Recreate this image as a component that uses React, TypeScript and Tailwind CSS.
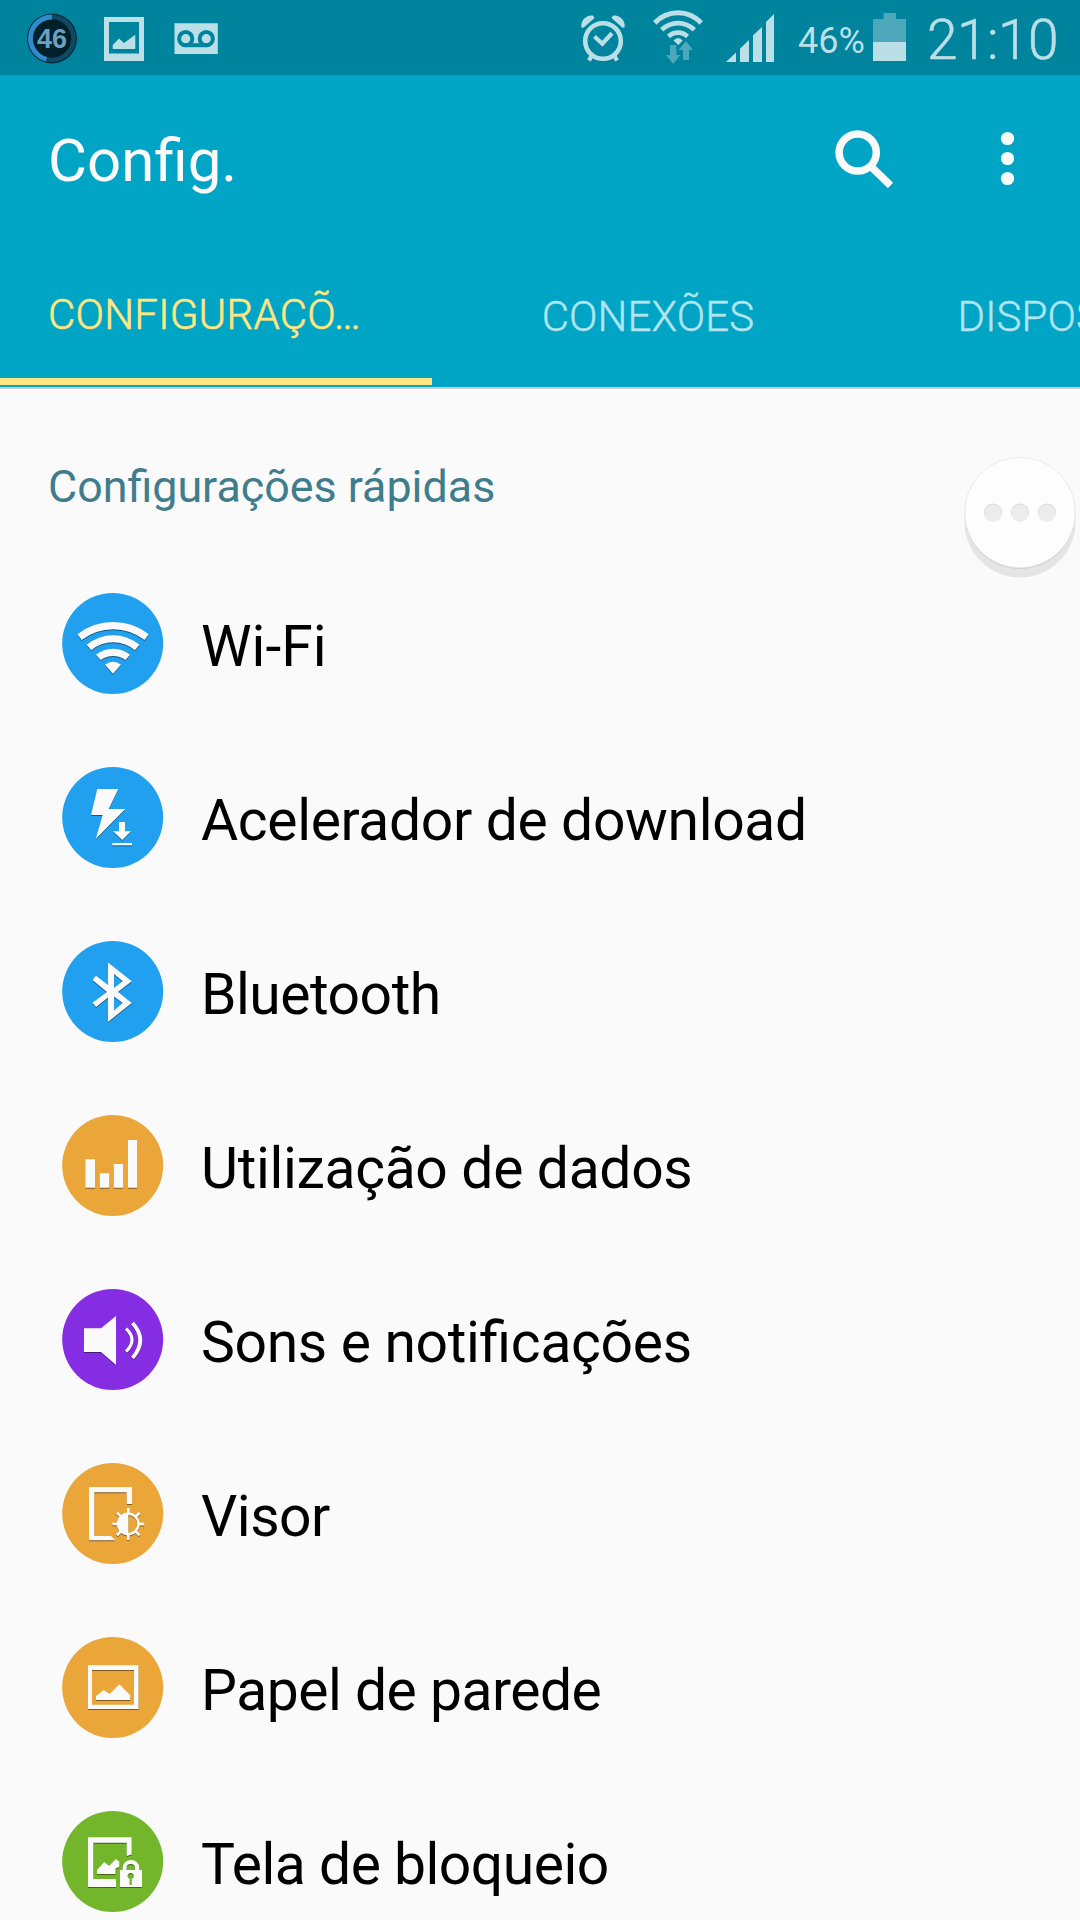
import type { ReactNode } from "react";

const MIST = "#bbdfe6";
const DIM = "#4da8bb";

function StatusBar() {
  return (
    <div className="flex h-[75px] w-full items-start bg-[#00839d] text-[#bbdfe6]">
      <svg className="ml-[26px] h-[75px] w-[52px] shrink-0" viewBox="26 0 52 75">
        <circle cx="52" cy="38.5" r="25" fill="#062b3a" />
        <circle cx="52" cy="38.5" r="21.5" fill="#00212a" stroke="#104865" strokeWidth="4.6" />
        <path d="M52 17A21.5 21.5 0 0 0 46.5 59.3" fill="none" stroke="#2f8bce" strokeWidth="4.8" />
        <text x="52" y="48.4" textAnchor="middle" fill="#6c9fc5" className="font-['Liberation_Sans'] text-[27px] font-bold">46</text>
      </svg>
      <svg className="ml-[26px] h-[75px] w-10 shrink-0" viewBox="104 0 40 75">
        <path fill={MIST} fillRule="evenodd" d="M104 17h40v44h-40zM109 22v31.500h30V22z" />
        <path fill={MIST} d="M112.700 49V45L119 38.500L124 43L135.300 34.700V49Z" />
      </svg>
      <svg className="ml-[30px] h-[75px] w-11 shrink-0" viewBox="174 0 44 75">
        <path fill={MIST} d="M174.500 23.300h43.300v30.700h-43.300z" />
        <g fill="none" stroke="#00839d" strokeWidth="4">
          <circle cx="185.700" cy="38.700" r="6.600" />
          <circle cx="206.300" cy="38.700" r="6.600" />
          <path d="M185 45.200h22" />
        </g>
      </svg>
      <div className="grow" />
      <svg className="h-[75px] w-[46px] shrink-0" viewBox="580 0 46 75">
        <g fill="none" stroke={MIST}>
          <circle cx="603" cy="41" r="17.800" strokeWidth="4.600" />
          <path d="M594.500 36.500l7.800 7.200L612 33.300" strokeWidth="4.200" />
          <path d="M592 55l-3 5.500M614 55l3 5.500" strokeWidth="4.200" />
        </g>
        <path fill={MIST} d="M581.500 27.500C580 21 586 14.500 593 15.500L594.500 18L583.500 27.800Z M624.500 27.500C626 21 620 14.500 613 15.500L611.500 18L622.500 27.800Z" />
      </svg>
      <svg className="ml-[26px] h-[75px] w-[52px] shrink-0" viewBox="652 0 52 75">
        <g fill={MIST}>
          <path d="M653 21A34.300 34.300 0 0 1 703 21L699.500 24.800A29 29 0 0 0 656.500 24.800Z" />
          <path d="M660 28A26 26 0 0 1 696 28L692.700 31.500A21 21 0 0 0 663.300 31.500Z" />
          <path d="M667 34.700A16 16 0 0 1 689 34.700L686 38.300A11.500 11.500 0 0 0 670 38.300Z" />
          <path d="M673.500 40.500Q678 35.500 682.700 40.500L678.300 45Z" />
        </g>
        <path fill={DIM} d="M670 45h6.300v10h4L673.300 64L666 55h4ZM686 41L693 50h-4v10h-6V50h-4.500Z" />
      </svg>
      <svg className="ml-[22px] h-[75px] w-12 shrink-0" viewBox="726 0 48 75">
        <path fill={MIST} d="M726 62L736 52.500V62ZM740 62V48.700L749 40V62ZM753 62V35.500L762 27V62ZM766 62V22L774 14V62Z" />
      </svg>
      <span className="ml-6 mt-[19px] w-[67px] whitespace-nowrap text-[36px] leading-[44px]">46%</span>
      <svg className="ml-2 h-[75px] w-[34px] shrink-0" viewBox="873 0 34 75">
        <path fill={DIM} d="M873 42V19h10.500v-6H896v6h10v23Z" />
        <path fill={MIST} d="M873 42h33v19h-33z" />
      </svg>
      <span className="ml-5 mt-[7px] mr-[22px] w-[131px] whitespace-nowrap text-[55px] font-light leading-[66px] tracking-[-0.5px] [-webkit-text-stroke:0.6px_#bbdfe6]">21:10</span>
    </div>
  );
}

function Header() {
  return (
    <header className="h-[314px] border-b-2 border-[#c9cdce] bg-[#00a5c6]">
      <div className="flex h-[170px] items-start pl-12">
        <h1 className="mt-[50px] text-[60px] leading-[72px] text-[#fafafa]">Config.</h1>
        <div className="grow" />
        <svg className="mt-[53px] h-[60px] w-[60px]" viewBox="834 128 60 60" fill="none" stroke="#fafafa" strokeWidth="7.500">
          <circle cx="857.700" cy="152.500" r="18.600" />
          <path d="M871 166.500L890.500 185.500" />
        </svg>
        <svg className="ml-[106px] mr-[66px] mt-[53px] h-[60px] w-[14px]" viewBox="999.500 128 14 60" fill="#fafafa">
          <circle cx="1007" cy="138.500" r="6.600" />
          <circle cx="1007" cy="158.500" r="6.600" />
          <circle cx="1007" cy="178.500" r="6.600" />
        </svg>
      </div>
      <nav className="flex h-[142px] overflow-hidden text-[42px] font-light leading-[50px]">
        <div className="flex w-[432px] shrink-0 flex-col justify-between pb-0.5 pt-[45px] text-[#ffe680]">
          <span className="pl-12 tracking-[0.25px] [-webkit-text-stroke:0.6px_#ffe680]">CONFIGURAÇÕ…</span>
          <div className="h-[7px] bg-[#ffe680]" />
        </div>
        <div className="w-[432px] shrink-0 pt-[47px] text-center tracking-[0.1px] text-[#b2e4ee] [-webkit-text-stroke:0.4px_#b2e4ee]">CONEXÕES</div>
        <div className="w-[432px] shrink-0 pt-[47px] text-center tracking-[0.1px] text-[#b2e4ee] [-webkit-text-stroke:0.4px_#b2e4ee]">DISPOSITIVO</div>
      </nav>
    </header>
  );
}

const WifiGlyph = (
  <>
    <path d="M15.500 41.300A57.400 57.400 0 0 1 86.700 41.300L82.500 47A51.400 51.400 0 0 0 19.700 47Z" />
    <path d="M24.700 51.700A41.500 41.500 0 0 1 77.500 51.700L72.800 57.300A33.400 33.400 0 0 0 29.300 57.300Z" />
    <path d="M34 61.700A27 27 0 0 1 68 61.700L63.500 67A21 21 0 0 0 38.700 67Z" />
    <path d="M43 71.700Q51 65.700 59 71.700L51 80.700Z" />
  </>
);

const BoostGlyph = (
  <>
    <path d="M35.300 22H56.300L46.700 42H63.300L33.700 72L40.700 48H29Z" />
    <path d="M57 55h6v9.300h6L60.300 73L51 64.300h6Z" />
    <path d="M50.300 76h19.700v2.300h-19.700z" />
  </>
);

const BluetoothGlyph = (
  <path
    fillRule="evenodd"
    d="M46 21.500L69.700 40.300L56 51L69.700 62L46 81V56.500L34 66L30.500 61.700L45 51L30.500 39L34 34.700L46 44ZM52 33V47L60.700 40.300ZM52 55.500V69.500L60.700 62Z"
  />
);

const BarsGlyph = (
  <path d="M23.300 44.300H33V72.700H23.300ZM37.700 58.300h9.600v14.400h-9.600ZM51.700 49H61V72.700h-9.300ZM66 25h9v47.700h-9Z" />
);

const SoundGlyph = (
  <>
    <path d="M22 39.300H39L54 27V76L39 63H22Z" />
    <path d="M64 39.700Q76 51 64 62.700" fill="none" stroke="#fafafa" strokeWidth="3.200" />
    <path d="M70.500 34Q86 51 70.500 69" fill="none" stroke="#fafafa" strokeWidth="3.800" />
  </>
);

const RAYS = [0, 45, 90, 135, 180, 225, 270, 315];

const DisplayGlyph = (
  <>
    <path d="M27 24H70V41H64.700V29.300H32.300V73H49L53.300 77.300H27Z" />
    <circle cx="66.300" cy="61" r="10.200" fill="none" stroke="#fafafa" strokeWidth="2.400" />
    <path d="M66.300 50A11 11 0 0 0 66.300 72Z" />
    {RAYS.map((a) => (
      <path key={a} d="M65 45h2.700v6h-2.700z" transform={`rotate(${a} 66.3 61)`} />
    ))}
  </>
);

const WallpaperGlyph = (
  <>
    <path fillRule="evenodd" d="M26 28.300H76.500V72H26ZM30 33V67.700H72V33Z" />
    <path d="M34 59.300L41.700 53L47.700 57L57.300 47.300L68.300 58.300V63H34Z" />
  </>
);

const LockGlyph = (
  <>
    <path d="M26 26.300H69.700V43.500L64.700 45V31.700H31.300V68H54V76H26Z" />
    <path d="M35 59L42.300 51L47 55L54 48L57.300 50.700V55.700L53.500 57.500V63H35Z" />
    <path
      fillRule="evenodd"
      d="M58 59H60.700V57A8.300 8 0 0 1 77.300 57V59H80V76H58ZM64.500 59H73V57A4.250 4 0 0 0 64.500 57ZM67.700 68V74H69.700V68A3.100 3.100 0 1 0 67.700 68Z"
    />
  </>
);

const items: { label: string; color: string; glyph: ReactNode; tracking: string }[] = [
  { label: "Wi-Fi", color: "#21a0ef", glyph: WifiGlyph, tracking: "tracking-normal" },
  { label: "Acelerador de download", color: "#21a0ef", glyph: BoostGlyph, tracking: "tracking-[-0.36px]" },
  { label: "Bluetooth", color: "#21a0ef", glyph: BluetoothGlyph, tracking: "tracking-[-0.5px]" },
  { label: "Utilização de dados", color: "#eaa638", glyph: BarsGlyph, tracking: "tracking-[-0.33px]" },
  { label: "Sons e notificações", color: "#852de2", glyph: SoundGlyph, tracking: "tracking-[-0.33px]" },
  { label: "Visor", color: "#eaa638", glyph: DisplayGlyph, tracking: "tracking-[-0.5px]" },
  { label: "Papel de parede", color: "#eaa638", glyph: WallpaperGlyph, tracking: "tracking-[-0.5px]" },
  { label: "Tela de bloqueio", color: "#73b62b", glyph: LockGlyph, tracking: "tracking-[-0.5px]" },
];

function FloatingButton() {
  return (
    <svg className="absolute right-0 top-[450px] h-[134px] w-[122px]" viewBox="958 449.500 122 134">
      <circle cx="1020" cy="521.500" r="55.500" fill="#e5e5e5" />
      <circle cx="1020" cy="513" r="55.500" fill="#d2d2d2" />
      <circle cx="1020" cy="512" r="55.300" fill="#fdfdfd" stroke="#e4e4e4" strokeWidth="0.700" />
      {[993, 1020, 1047].map((x) => (
        <g key={x}>
          <circle cx={x} cy="512" r="9" fill="#dcdcdc" />
          <circle cx={x} cy="512.700" r="8.500" fill="#ececec" />
        </g>
      ))}
    </svg>
  );
}

export default function App() {
  return (
    <div className="relative h-[1920px] w-[1080px] overflow-hidden bg-[#fafafa] font-[Roboto,sans-serif]">
      <StatusBar />
      <Header />
      <h2 className="h-[168px] pl-12 pt-[71px] text-[44.8px] leading-[54px] text-[#3f7d8c]">Configurações rápidas</h2>
      <ul>
        {items.map(({ label, color, glyph, tracking }) => (
          <li key={label} className="flex h-[174px] items-start pl-[62px]">
            <svg className="mt-9 h-[102px] w-[102px] shrink-0" viewBox="0 0 102 102">
              <circle cx="50.700" cy="50.500" r="50.500" fill={color} />
              <g fill="#fafafa" className="drop-shadow-[0.7px_1.5px_0.5px_rgba(0,0,0,0.45)]">{glyph}</g>
            </svg>
            <span className={`ml-[37px] mt-14 whitespace-nowrap text-[57px] leading-[68px] text-black [font-feature-settings:'liga'_1] ${tracking}`}>{label}</span>
          </li>
        ))}
      </ul>
      <FloatingButton />
    </div>
  );
}
